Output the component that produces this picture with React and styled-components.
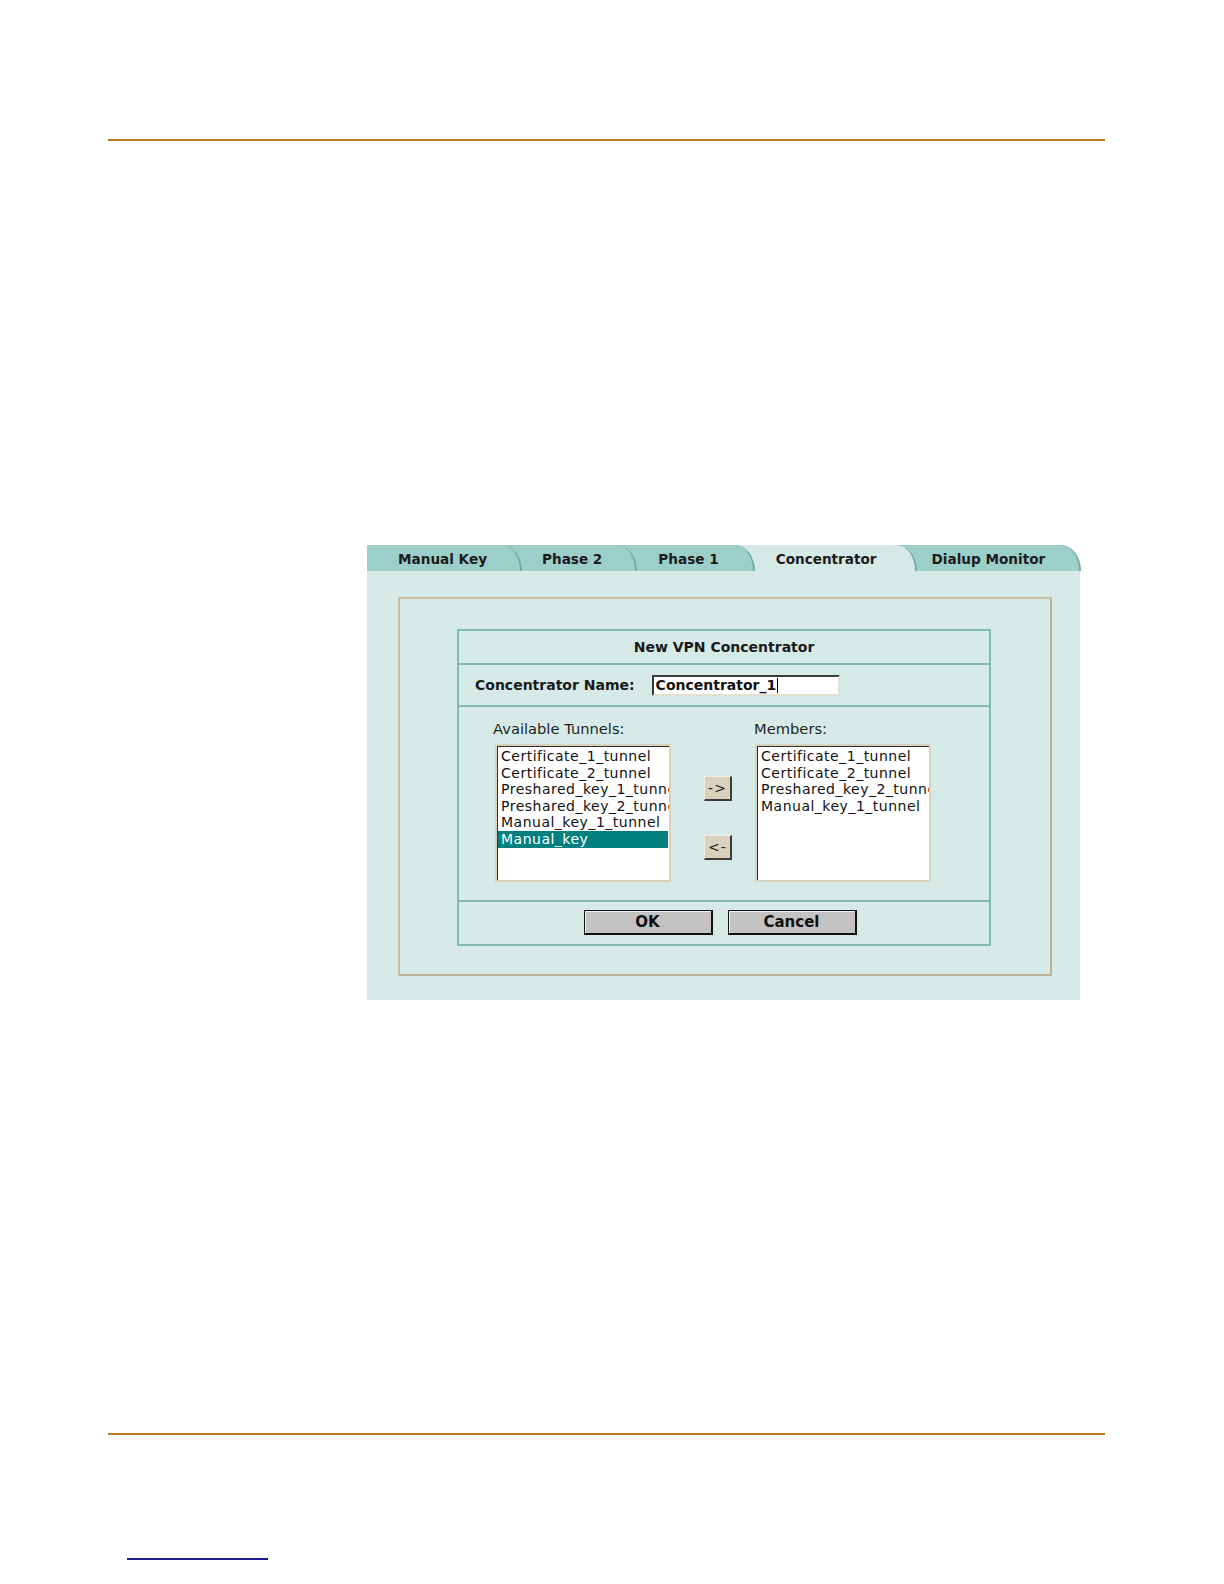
import React from 'react';
import styled, { createGlobalStyle } from 'styled-components';

const GlobalStyle = createGlobalStyle`
  body {
    margin: 0;
    background: #ffffff;
    font-family: "DejaVu Sans", Verdana, sans-serif;
  }
`;

const Page = styled.div`
  display: flex;
  flex-direction: column;
  padding-bottom: 20px;
`;

const Rule = styled.div`
  margin-left: 108px;
  width: 997px;
  height: 2px;
  background: #b67a1f;
  margin-top: ${(p) => p.$top}px;
`;

const Figure = styled.div`
  margin-top: 404px;
  margin-left: 367px;
  width: 713px;
  display: flex;
  flex-direction: column;
`;

const TabStrip = styled.div`
  display: flex;
  height: 26px;
`;

const Tab = styled.div`
  position: relative;
  z-index: ${(p) => p.$z};
  display: flex;
  align-items: center;
  height: 26px;
  box-sizing: border-box;
  padding: 1px ${(p) => p.$right}px 0 ${(p) => p.$left}px;
  margin-left: ${(p) => (p.$first ? 0 : -18)}px;
  background: ${(p) => (p.$active ? '#d5eae7' : '#9ccfca')};
  border-right: 2px solid #72aba5;
  border-top-right-radius: 20px 26px;
  font-size: 13.6px;
  font-weight: bold;
  color: #1b1b1b;
  white-space: nowrap;
`;

const Panel = styled.div`
  background: #d6ebe8;
  height: 429px;
  box-sizing: border-box;
  padding: 26px 28px 24px 31px;
`;

const Frame = styled.div`
  height: 100%;
  box-sizing: border-box;
  border: 2px solid #bdb294;
  border-top-color: #c9bf9f;
  border-left-color: #c9bf9f;
  padding: 30px 59px 0 57px;
`;

const Table = styled.div`
  width: 534px;
  box-sizing: border-box;
  border: 2px solid #82bab2;
  display: flex;
  flex-direction: column;
`;

const Row = styled.div`
  height: ${(p) => p.$h}px;
  box-sizing: border-box;
  border-top: ${(p) => (p.$first ? 'none' : '2px solid #82bab2')};
  display: flex;
`;

const Title = styled.div`
  flex: 1;
  display: flex;
  align-items: center;
  justify-content: center;
  font-size: 14px;
  font-weight: bold;
  color: #1a1a1a;
`;

const NameRow = styled.div`
  flex: 1;
  display: flex;
  align-items: center;
  padding: 0 0 0 16px;
  gap: 17px;
`;

const Label = styled.span`
  font-size: 14px;
  font-weight: bold;
  color: #1a1a1a;
`;

const TextBox = styled.div`
  width: 188px;
  height: 21px;
  box-sizing: border-box;
  background: #ffffff;
  border: 2px solid #e4e0cf;
  border-top-color: #3a3a3a;
  border-left-color: #3a3a3a;
  display: flex;
  align-items: center;
  padding-left: 2px;
  font-size: 14px;
  font-weight: bold;
  color: #111;
`;

const Caret = styled.span`
  display: inline-block;
  width: 1px;
  height: 15px;
  margin-left: 1px;
  background: #000;
`;

const ListsRow = styled.div`
  flex: 1;
  display: flex;
  padding: 12px 0 0 34px;
`;

const Column = styled.div`
  display: flex;
  flex-direction: column;
  gap: 5px;
`;

const ColLabel = styled.div`
  font-size: 14.7px;
  color: #1f1f1f;
  line-height: 20px;
`;

const ListBox = styled.div`
  width: 176px;
  height: 138px;
  box-sizing: border-box;
  margin-left: ${(p) => p.$shift}px;
  background: #ffffff;
  border: 2px solid #d8d1bc;
  box-shadow: inset 1px 1px 0 #2e2e2e;
  padding: 2px 1px 0 1px;
  overflow: hidden;
`;

const Item = styled.div`
  font-size: 14px;
  letter-spacing: 0.5px;
  line-height: 16.6px;
  height: 16.6px;
  padding-left: 3px;
  white-space: nowrap;
  color: ${(p) => (p.$selected ? '#ffffff' : '#111111')};
  background: ${(p) => (p.$selected ? '#037f7f' : 'transparent')};
`;

const Movers = styled.div`
  display: flex;
  flex-direction: column;
  gap: 34px;
  padding: 57px 0 0 0;
  margin: 0 22px 0 33px;
`;

const MoveButton = styled.div`
  width: 28px;
  height: 25px;
  box-sizing: border-box;
  background: #d8d1bb;
  border: 1px solid #f1ede2;
  border-right: 2px solid #3c3c3c;
  border-bottom: 2px solid #3c3c3c;
  display: flex;
  align-items: center;
  justify-content: center;
  font-size: 14px;
  color: #222;
  letter-spacing: 1px;
`;

const ButtonRow = styled.div`
  flex: 1;
  display: flex;
  align-items: center;
  justify-content: center;
  gap: 15px;
  padding: 0 8px 2px 0;
`;

const Button = styled.div`
  width: 129px;
  height: 25px;
  box-sizing: border-box;
  background: #c3c3c3;
  border: 1px solid #111;
  border-right-width: 2px;
  border-bottom-width: 2px;
  box-shadow: inset 1px 1px 0 #f2f2f2;
  display: flex;
  align-items: center;
  justify-content: center;
  font-size: 15px;
  font-weight: bold;
  color: #111;
`;

const LinkLine = styled.div`
  margin-top: 123px;
  margin-left: 127px;
  width: 141px;
  height: 2px;
  background: #1c1c8a;
`;

const tabs = [
  { label: 'Manual Key', left: 31, right: 33 },
  { label: 'Phase 2', left: 38, right: 33 },
  { label: 'Phase 1', left: 39, right: 34 },
  { label: 'Concentrator', left: 39, right: 38 },
  { label: 'Dialup Monitor', left: 33, right: 34 },
];

const available = [
  'Certificate_1_tunnel',
  'Certificate_2_tunnel',
  'Preshared_key_1_tunnel',
  'Preshared_key_2_tunnel',
  'Manual_key_1_tunnel',
  'Manual_key',
];

const members = [
  'Certificate_1_tunnel',
  'Certificate_2_tunnel',
  'Preshared_key_2_tunnel',
  'Manual_key_1_tunnel',
];

const App = () => {
  return (
    <Page>
      <GlobalStyle />
      <Rule $top={139} />

      <Figure>
        <TabStrip>
          {tabs.map((t, i) => (
            <Tab
              key={t.label}
              $first={i === 0}
              $active={t.label === 'Concentrator'}
              $left={t.left}
              $right={t.right}
              $z={10 - i}
            >
              {t.label}
            </Tab>
          ))}
        </TabStrip>

        <Panel>
          <Frame>
            <Table>
              <Row $h={32} $first>
                <Title>New VPN Concentrator</Title>
              </Row>
              <Row $h={42}>
                <NameRow>
                  <Label>Concentrator Name:</Label>
                  <TextBox>
                    Concentrator_1
                    <Caret />
                  </TextBox>
                </NameRow>
              </Row>
              <Row $h={195}>
                <ListsRow>
                  <Column>
                    <ColLabel>Available Tunnels:</ColLabel>
                    <ListBox $shift={2}>
                      {available.map((name) => (
                        <Item key={name} $selected={name === 'Manual_key'}>
                          {name}
                        </Item>
                      ))}
                    </ListBox>
                  </Column>
                  <Movers>
                    <MoveButton>-&gt;</MoveButton>
                    <MoveButton>&lt;-</MoveButton>
                  </Movers>
                  <Column>
                    <ColLabel>Members:</ColLabel>
                    <ListBox $shift={1}>
                      {members.map((name) => (
                        <Item key={name}>{name}</Item>
                      ))}
                    </ListBox>
                  </Column>
                </ListsRow>
              </Row>
              <Row $h={44}>
                <ButtonRow>
                  <Button>OK</Button>
                  <Button>Cancel</Button>
                </ButtonRow>
              </Row>
            </Table>
          </Frame>
        </Panel>
      </Figure>

      <Rule $top={433} />
      <LinkLine />
    </Page>
  );
};

export default App;
